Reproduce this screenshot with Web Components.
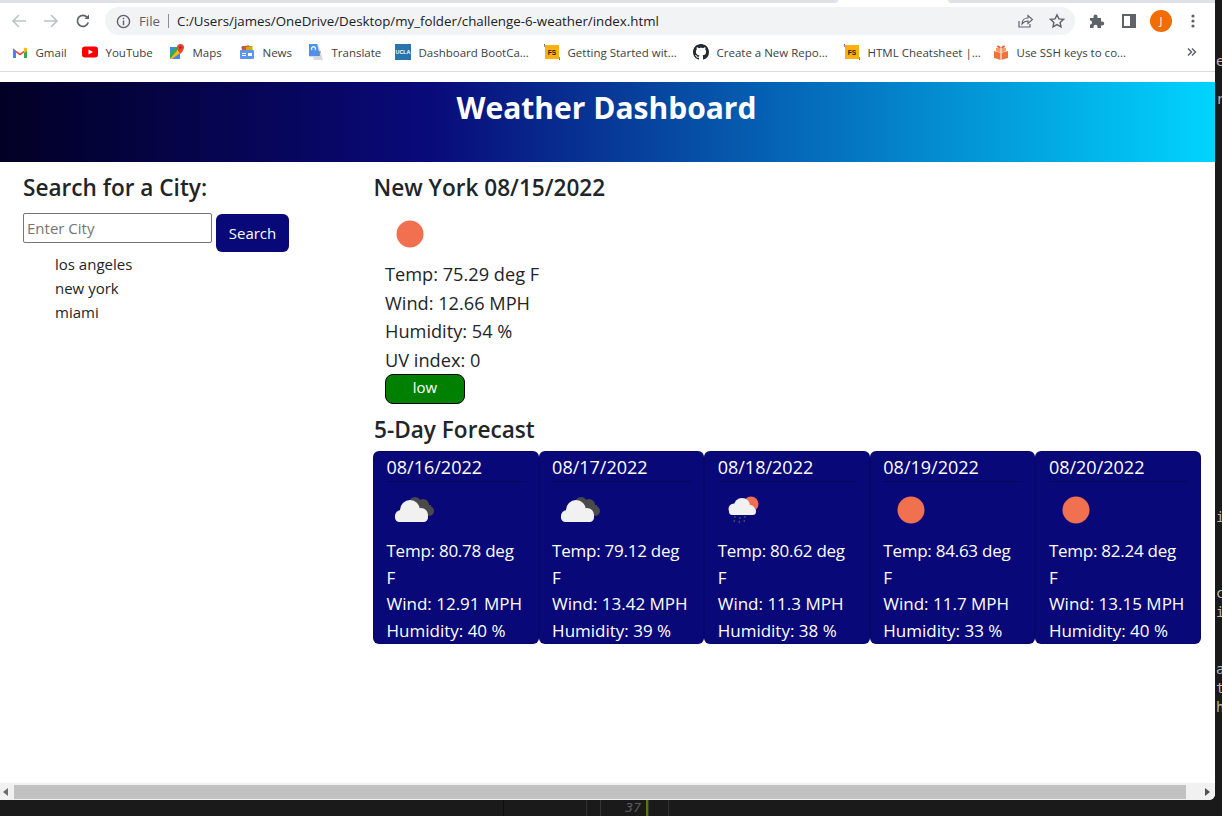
<!DOCTYPE html>
<html lang="en">
<head>
<meta charset="utf-8">
<title>Weather Dashboard</title>
<style>
  html, body { margin: 0; height: 816px; overflow: hidden; background: #1a1a1a; }
  body { font-family: "Open Sans", "Noto Sans", sans-serif; color: #212529; }
</style>
</head>
<body>
<desktop-frame>
  <browser-toolbar></browser-toolbar>
  <bookmark-bar>
    <bookmark-item label="Gmail" width="70" icon="gmail"></bookmark-item>
    <bookmark-item label="YouTube" width="87" icon="youtube"></bookmark-item>
    <bookmark-item label="Maps" width="70" icon="maps"></bookmark-item>
    <bookmark-item label="News" width="69" icon="news"></bookmark-item>
    <bookmark-item label="Translate" width="87" icon="translate"></bookmark-item>
    <bookmark-item label="Dashboard BootCa..." width="149" icon="ucla"></bookmark-item>
    <bookmark-item label="Getting Started wit..." width="149" icon="fs"></bookmark-item>
    <bookmark-item label="Create a New Repo..." width="151" icon="github"></bookmark-item>
    <bookmark-item label="HTML Cheatsheet |..." width="149" icon="fs"></bookmark-item>
    <bookmark-item label="Use SSH keys to co..." width="150" icon="gift"></bookmark-item>
  </bookmark-bar>
  <weather-page>
    <weather-header>Weather Dashboard</weather-header>
    <weather-layout>
      <search-panel slot="aside"></search-panel>
      <current-weather></current-weather>
      <h-title>5-Day Forecast</h-title>
      <forecast-row>
        <forecast-card date="08/16/2022" icon="cloudy" temp="80.78" wind="12.91" humidity="40"></forecast-card>
        <forecast-card date="08/17/2022" icon="cloudy" temp="79.12" wind="13.42" humidity="39"></forecast-card>
        <forecast-card date="08/18/2022" icon="rain" temp="80.62" wind="11.3" humidity="38"></forecast-card>
        <forecast-card date="08/19/2022" icon="sun" temp="84.63" wind="11.7" humidity="33"></forecast-card>
        <forecast-card date="08/20/2022" icon="sun" temp="82.24" wind="13.15" humidity="40"></forecast-card>
      </forecast-row>
    </weather-layout>
  </weather-page>
  <h-scrollbar></h-scrollbar>
</desktop-frame>

<script>
// svg for the weather images, same 50x50 box as the openweather png
const WEATHER_ICONS = {
  sun: `<circle cx="25" cy="25" r="13.500" fill="#f1704f"/>`,
  cloudy: `
    <g fill="#4a4a4a"><circle cx="26" cy="18" r="6"/><circle cx="34" cy="20" r="6"/><circle cx="40" cy="26" r="5"/><rect x="26" y="20" width="16" height="10"/></g>
    <g fill="#f1f1f1"><circle cx="21" cy="25" r="10"/><circle cx="12" cy="31" r="6"/><circle cx="32" cy="30" r="7"/><rect x="6" y="28" width="33" height="9" rx="4.500"/></g>`,
  rain: `
    <circle cx="31" cy="19" r="7.500" fill="#f1704f"/>
    <g fill="#f1f1f1"><circle cx="22" cy="21" r="8"/><circle cx="14" cy="24" r="5.500"/><circle cx="30" cy="25" r="5"/><rect x="9" y="23" width="27" height="7" rx="3.500"/></g>
    <g stroke="#4a4a55" stroke-width="1.500" stroke-dasharray="2 2"><path d="M15 31l-1 7M20 32l-1 7M25 31l-1 7"/></g>`
};

// favicons in the bookmarks bar
const BOOKMARK_ICONS = {
  gmail: `<path d="M1 14V4.500L8 9.500l7-5V14h-3V8.500L8 11.500 4 8.500V14z" fill="#ea4335"/><path d="M1 5v9h3V7z" fill="#4285f4"/><path d="M15 5v9h-3V7z" fill="#34a853"/><path d="M12 7V3.600l3 .9V7l-3 2z" fill="#fbbc04"/>`,
  youtube: `<rect x="0" y="2.500" width="16" height="11" rx="3" fill="#f00"/><path d="M6.500 5.500v5l4.500-2.500z" fill="#fff"/>`,
  maps: `<path d="M1 3h10v12H1z" fill="#34a853"/><path d="M1 15l10-12v12z" fill="#fbbc04"/><path d="M3 15l8-6v6z" fill="#4285f4"/><path d="M1 3h5l-5 6z" fill="#4285f4"/><path d="M11.500 0a3.500 3.500 0 0 1 3.500 3.500C15 6 11.500 10 11.500 10S8 6 8 3.500A3.500 3.500 0 0 1 11.500 0z" fill="#ea4335"/><circle cx="11.500" cy="3.500" r="1.200" fill="#a52714"/>`,
  news: `<path d="M3 2h10v5H3z" fill="#34a853"/><path d="M2 3l8-2 1 5H3z" fill="#ea4335" opacity=".75"/><path d="M7 3l7-1v6H7z" fill="#fbbc04" opacity=".7"/><rect x="1" y="6" width="14" height="9" rx="1" fill="#5c94ee"/><path d="M3 9h4v1H3zM3 11h4v1H3zM9 9h4v3H9z" fill="#fff"/>`,
  translate: `<path d="M1 0h9l5 16H6l-1-3H1z" fill="#d4d7dc"/><path d="M1 0h8l3 12H1z" fill="#4d90f0"/><path d="M4 6a2 2 0 1 1 3 0" stroke="#fff" stroke-width="1.200" fill="none"/><path d="M10 8l3 0M11.500 8l-1 4" stroke="#7a7f87" stroke-width="1" fill="none"/>`,
  ucla: `<rect width="16" height="16" fill="#2774ae"/><text x="8" y="10" text-anchor="middle" font-family="Liberation Sans" font-weight="700" font-size="5.400" fill="#fff">UCLA</text>`,
  fs: `<rect x="1" y="1" width="14" height="14" fill="#fdb00f"/><text x="8" y="11" text-anchor="middle" font-family="Liberation Sans" font-weight="700" font-size="6.500" fill="#222">FS</text><path d="M1 0H0v3M15 16h1v-3" stroke="#222" fill="none"/>`,
  github: `<path fill="#24292f" fill-rule="evenodd" d="M8 0C3.580 0 0 3.580 0 8c0 3.540 2.290 6.530 5.470 7.590.4.070.550-.170.550-.380 0-.190-.010-.820-.010-1.490-2.010.370-2.530-.490-2.690-.940-.090-.230-.480-.940-.820-1.130-.280-.150-.680-.520-.010-.530.630-.010 1.080.580 1.230.820.720 1.210 1.870.870 2.330.660.070-.520.280-.870.510-1.070-1.780-.2-3.640-.890-3.640-3.950 0-.870.310-1.590.820-2.150-.080-.2-.360-1.020.080-2.120 0 0 .670-.210 2.200.820.640-.180 1.320-.270 2-.270s1.360.090 2 .270c1.530-1.040 2.200-.820 2.200-.820.440 1.100.160 1.920.080 2.120.510.560.820 1.270.820 2.150 0 3.070-1.870 3.750-3.650 3.950.290.250.540.730.540 1.480 0 1.070-.010 1.930-.010 2.200 0 .210.150.460.550.380A8.010 8.010 0 0 0 16 8c0-4.420-3.580-8-8-8z"/>`,
  gift: `<path d="M1 7l7 2 7-2v7l-7 2-7-2z" fill="#f0743a"/><path d="M3 4h10v3l-5 2-5-2z" fill="#f99a62"/><path d="M8 4C6 1 4 1 4 2.500S6 4 8 4zM8 4c2-3 4-3 4-1.500S10 4 8 4z" fill="#e85d27"/><path d="M7.500 4h1v12h-1z" fill="#fff"/>`
};

// small helper so each element is just a class with a template string
function shadow(el, html) {
  el.attachShadow({ mode: 'open' }).innerHTML = html;
}

class DesktopFrame extends HTMLElement {
  connectedCallback() {
    const codeLines = new Array(34).fill('');
    codeLines[0] = 'e'; codeLines[2] = 'r'; codeLines[24] = 'i';
    codeLines[28] = 'c'; codeLines[29] = 'i'; codeLines[32] = 'a'; codeLines[33] = 't';
    codeLines.push('h');
    shadow(this, `
      <style>
        :host { display: grid; grid-template-columns: 1215px 1fr; grid-template-rows: 800px 16px; width: 1222px; height: 816px; background: #1a1a1a; overflow: hidden; }
        .window { display: flex; flex-direction: column; background: #fff; border-bottom-right-radius: 6px; overflow: hidden; min-height: 0; }
        .code { margin: 0; padding-top: 52px; font: 14px/19px "DejaVu Sans Mono", monospace; letter-spacing: -2.500px; color: #b9b9b0; overflow: hidden; padding-left: 1px; }
        .editor { grid-column: 1 / 3; display: grid; grid-template-columns: 503px 83px 14px 48px 20px 1fr; font: italic 13px/16px "DejaVu Sans Mono", monospace; color: #5b5b5b; }
        .editor div { border-left: 1px solid #333; }
        .editor div:first-child { border-left: 0; }
        .editor .num { text-align: right; padding-right: 5px; border-right: 2px solid #4f7a12; }
        .editor .plain { border-left-color: #0f0f0f; }
      </style>
      <div class="window"><slot></slot></div>
      <pre class="code">${codeLines.join('\n')}</pre>
      <div class="editor"><div></div><div class="plain"></div><div></div><div class="num">37</div><div></div><div style="border-left:1px solid #333;width:0"></div></div>
    `);
  }
}

class BrowserToolbar extends HTMLElement {
  connectedCallback() {
    shadow(this, `
      <style>
        :host { display: block; flex: none; height: 36px; background: #fff; font: 13.300px "Open Sans", sans-serif; color: #3c4043; }
        .tabs { display: flex; height: 3px; margin-bottom: 4px; }
        .tabs span { background: #dee1e6; }
        .tabs .left { width: 838px; border-bottom-right-radius: 3px; }
        .tabs .right { flex: 1; margin-left: 110px; border-bottom-left-radius: 3px; }
        .row { display: flex; align-items: center; height: 28px; }
        svg { display: block; flex: none; }
        .nav { display: flex; gap: 16px; padding-left: 11px; width: 105px; box-sizing: border-box; align-items: center; }
        .omni { flex: none; width: 970px; height: 28px; background: #f1f3f4; border-radius: 14px; display: flex; align-items: center; box-sizing: border-box; padding-left: 11px; }
        .file { margin-left: 8px; color: #5f6368; }
        .sep { width: 1px; height: 14px; background: #8a8d91; margin: 0 8px; }
        .url { color: #202124; white-space: nowrap; flex: 1; }
        .omni-end { display: flex; gap: 16px; padding-right: 10px; align-items: center; }
        .tools { display: grid; grid-template-columns: repeat(4, 32px); justify-items: center; align-items: center; padding-left: 6px; }
        .avatar { width: 22px; height: 22px; border-radius: 50%; background: #f36c00; color: #fff; font-size: 11px; text-align: center; line-height: 22px; }
      </style>
      <div class="tabs"><span class="left"></span><span class="right"></span></div>
      <div class="row">
        <div class="nav">
          <svg width="16" height="16" viewBox="0 0 16 16" fill="none" stroke="#bdc1c6" stroke-width="1.600"><path d="M15 8H2M8 2L2 8l6 6"/></svg>
          <svg width="16" height="16" viewBox="0 0 16 16" fill="none" stroke="#bdc1c6" stroke-width="1.600"><path d="M1 8h13M8 2l6 6-6 6"/></svg>
          <svg width="16" height="16" viewBox="0 0 16 16" fill="none" stroke="#5f6368" stroke-width="1.700"><path d="M13.200 9.500A5.500 5.500 0 1 1 12 4.200"/><path d="M14 1.500V6H9.500z" fill="#5f6368" stroke="none"/></svg>
        </div>
        <div class="omni">
          <svg width="15" height="15" viewBox="0 0 16 16" fill="none" stroke="#5f6368" stroke-width="1.500"><circle cx="8" cy="8" r="6.500"/><path d="M8 7v5M8 4v1.600"/></svg>
          <span class="file">File</span><span class="sep"></span>
          <span class="url">C:/Users/james/OneDrive/Desktop/my_folder/challenge-6-weather/index.html</span>
          <span class="omni-end">
            <svg width="16" height="16" viewBox="0 0 16 16" fill="none" stroke="#5f6368" stroke-width="1.200"><path d="M2 8v6h11v-3"/><path d="M5 11c0-4 3-6 6-6V2.500l4.500 4-4.500 4V8c-3 0-4.500 1-6 3z"/></svg>
            <svg width="16" height="16" viewBox="0 0 16 16" fill="none" stroke="#5f6368" stroke-width="1.400"><path d="M8 1.800l1.900 4.100 4.500.5-3.300 3 .9 4.500L8 11.600l-4 2.300.9-4.500-3.300-3 4.500-.5z"/></svg>
          </span>
        </div>
        <div class="tools">
          <svg width="16" height="16" viewBox="0 0 16 16" fill="#5f6368"><path d="M1 5h3.500V3.500a2 2 0 0 1 4 0V5H12v3.500h1.200a2 2 0 0 1 0 4H12V15H8.500v-1.200a2 2 0 0 0-4 0V15H1v-3.500h.8a2.200 2.200 0 0 0 0-4H1z"/></svg>
          <svg width="14" height="14" viewBox="0 0 14 14"><rect x="1" y="1" width="12" height="12" fill="none" stroke="#5f6368" stroke-width="2"/><rect x="8" y="1" width="5" height="12" fill="#5f6368"/></svg>
          <span class="avatar">J</span>
          <svg width="4" height="14" viewBox="0 0 4 14" fill="#5f6368"><circle cx="2" cy="2" r="1.600"/><circle cx="2" cy="7" r="1.600"/><circle cx="2" cy="12" r="1.600"/></svg>
        </div>
      </div>
    `);
  }
}

class BookmarkBar extends HTMLElement {
  connectedCallback() {
    shadow(this, `
      <style>
        :host { display: flex; flex: none; height: 36px; box-sizing: border-box; border-bottom: 1px solid #dadce0; background: #fff; align-items: center; padding: 0 0 3px 12px; }
        .row { display: flex; align-items: center; flex: 1; }
        svg { margin-left: auto; margin-right: 18px; flex: none; }
      </style>
      <div class="row"><slot></slot></div>
      <svg width="10" height="10" viewBox="0 0 10 10" fill="none" stroke="#5f6368" stroke-width="1.500"><path d="M1 1.500L4.500 5 1 8.500M5 1.500L8.500 5 5 8.500"/></svg>
    `);
  }
}

class BookmarkItem extends HTMLElement {
  connectedCallback() {
    const icon = BOOKMARK_ICONS[this.getAttribute('icon')];
    shadow(this, `
      <style>
        :host { display: flex; align-items: center; gap: 7.500px; width: ${this.getAttribute('width')}px; flex: none; font: 11.500px "Open Sans", sans-serif; color: #3c4043; white-space: nowrap; }
        svg { flex: none; }
      </style>
      <svg width="16" height="16" viewBox="0 0 16 16">${icon}</svg>
      <span>${this.getAttribute('label')}</span>
    `);
  }
}

class WeatherPage extends HTMLElement {
  connectedCallback() {
    shadow(this, `
      <style>
        :host { display: block; flex: 1; min-height: 0; padding-top: 10px; background: #fff; overflow: hidden; }
      </style>
      <slot></slot>
    `);
  }
}

class WeatherHeader extends HTMLElement {
  connectedCallback() {
    shadow(this, `
      <style>
        :host { display: block; height: 80px; box-sizing: border-box; padding: 4px 2px 0 0; text-align: center; font-weight: 700; font-size: 30px; line-height: 44px; color: #fff;
          background: linear-gradient(90deg, rgb(2,0,36) 0%, rgb(9,9,121) 35%, rgb(0,212,255) 100%); }
      </style>
      <slot></slot>
    `);
  }
}

class WeatherLayout extends HTMLElement {
  connectedCallback() {
    shadow(this, `
      <style>
        :host { display: grid; grid-template-columns: 350px 828px; padding: 11px 0 0 23px; }
        main { display: block; }
      </style>
      <slot name="aside"></slot>
      <main><slot></slot></main>
    `);
  }
}

class HTitle extends HTMLElement {
  connectedCallback() {
    shadow(this, `
      <style>
        :host { display: block; padding-left: 1px; font-size: 22.600px; font-weight: 600; line-height: 29px; color: #212529; }
      </style>
      <slot></slot>
    `);
  }
}

class SearchPanel extends HTMLElement {
  connectedCallback() {
    shadow(this, `
      <style>
        :host { display: block; }
        h2 { margin: 0 0 11px; font-size: 22.600px; font-weight: 600; line-height: 29px; color: #212529; }
        .form { display: flex; gap: 4px; align-items: flex-start; }
        input { width: 189px; height: 30px; box-sizing: border-box; border: 1px solid #767676; border-radius: 2px; padding: 1px 3px; font: 15px "Open Sans", sans-serif; margin: 0; }
        input::placeholder { color: #757575; }
        button { margin-top: 1px; width: 73px; height: 38px; border: 0; border-radius: 6px; background: #080878; color: #fff; font: 15px "Open Sans", sans-serif; }
        ul { margin: 0; padding: 0 0 0 32px; list-style: none; font-size: 15px; line-height: 24px; color: #212529; }
      </style>
      <h2>Search for a City:</h2>
      <div class="form">
        <input placeholder="Enter City">
        <button>Search</button>
      </div>
      <ul><li>los angeles</li><li>new york</li><li>miami</li></ul>
    `);
  }
}

class WeatherIcon extends HTMLElement {
  connectedCallback() {
    shadow(this, `
      <style>
        :host { display: block; width: 50px; height: 50px; }
        svg { display: block; }
      </style>
      <svg width="50" height="50" viewBox="0 0 50 50">${WEATHER_ICONS[this.getAttribute('name')]}</svg>
    `);
  }
}

class CurrentWeather extends HTMLElement {
  connectedCallback() {
    shadow(this, `
      <style>
        :host { display: block; margin-bottom: 11px; }
        h2 { margin: 0 0 7px .5px; font-size: 22.600px; font-weight: 600; line-height: 29px; color: #212529; }
        .body { padding-left: 12px; }
        p { margin: 0; font-size: 18.200px; line-height: 28.500px; }
        .uv { display: block; width: 80px; height: 30px; box-sizing: border-box; border: 1px solid #000; border-radius: 8px; background: green; color: #fff; font-size: 15px; line-height: 24px; text-align: center; }
        weather-icon { margin-bottom: 1px; }
      </style>
      <h2>New York 08/15/2022</h2>
      <div class="body">
        <weather-icon name="sun"></weather-icon>
        <p>Temp: 75.29 deg F</p>
        <p>Wind: 12.66 MPH</p>
        <p>Humidity: 54 %</p>
        <p>UV index: 0</p>
        <span class="uv">low</span>
      </div>
    `);
  }
}

class ForecastRow extends HTMLElement {
  connectedCallback() {
    shadow(this, `
      <style>
        :host { display: grid; grid-template-columns: repeat(5, 1fr); margin-top: 7px; }
      </style>
      <slot></slot>
    `);
  }
}

class ForecastCard extends HTMLElement {
  connectedCallback() {
    const a = (n) => this.getAttribute(n);
    shadow(this, `
      <style>
        :host { display: block; height: 193px; box-sizing: border-box; background: #080878; border: 1px solid rgba(0,0,0,.125); border-radius: 6px; color: #fff; font-size: 17px; overflow: hidden; }
        .date { margin: 2px 12px 0 12.500px; font-size: 18px; line-height: 27px; border-bottom: 1px solid rgba(0,0,0,.25); }
        weather-icon { margin: 3px 0 0 15px; }
        p { margin: 3px 12px 0 12.500px; line-height: 26.700px; }
        p + p { margin-top: 0; }
        .temp { letter-spacing: -.25px; }
      </style>
      <div class="date">${a('date')}</div>
      <weather-icon name="${a('icon')}"></weather-icon>
      <p class="temp">Temp: ${a('temp')} deg F</p>
      <p>Wind: ${a('wind')} MPH</p>
      <p>Humidity: ${a('humidity')} %</p>
    `);
  }
}

class HScrollbar extends HTMLElement {
  connectedCallback() {
    shadow(this, `
      <style>
        :host { display: flex; flex: none; height: 17px; background: #f1f1f1; align-items: center; margin-top: auto; }
        .arrow { width: 14px; flex: none; display: flex; box-sizing: border-box; padding-left: 3px; }
        .track { flex: 1; height: 14px; background: #c1c1c1; margin-right: 15px; }
        .end { padding-left: 4px; }
        .arrow svg { display: block; }
      </style>
      <span class="arrow"><svg width="5" height="8" viewBox="0 0 5 8"><path d="M5 0v8L0 4z" fill="#6e6e6e"/></svg></span>
      <span class="track"></span>
      <span class="arrow end"><svg width="5" height="8" viewBox="0 0 5 8"><path d="M0 0v8l5-4z" fill="#505050"/></svg></span>
    `);
  }
}

customElements.define('desktop-frame', DesktopFrame);
customElements.define('browser-toolbar', BrowserToolbar);
customElements.define('bookmark-bar', BookmarkBar);
customElements.define('bookmark-item', BookmarkItem);
customElements.define('weather-page', WeatherPage);
customElements.define('weather-header', WeatherHeader);
customElements.define('weather-layout', WeatherLayout);
customElements.define('h-title', HTitle);
customElements.define('search-panel', SearchPanel);
customElements.define('weather-icon', WeatherIcon);
customElements.define('current-weather', CurrentWeather);
customElements.define('forecast-row', ForecastRow);
customElements.define('forecast-card', ForecastCard);
customElements.define('h-scrollbar', HScrollbar);
</script>
</body>
</html>
